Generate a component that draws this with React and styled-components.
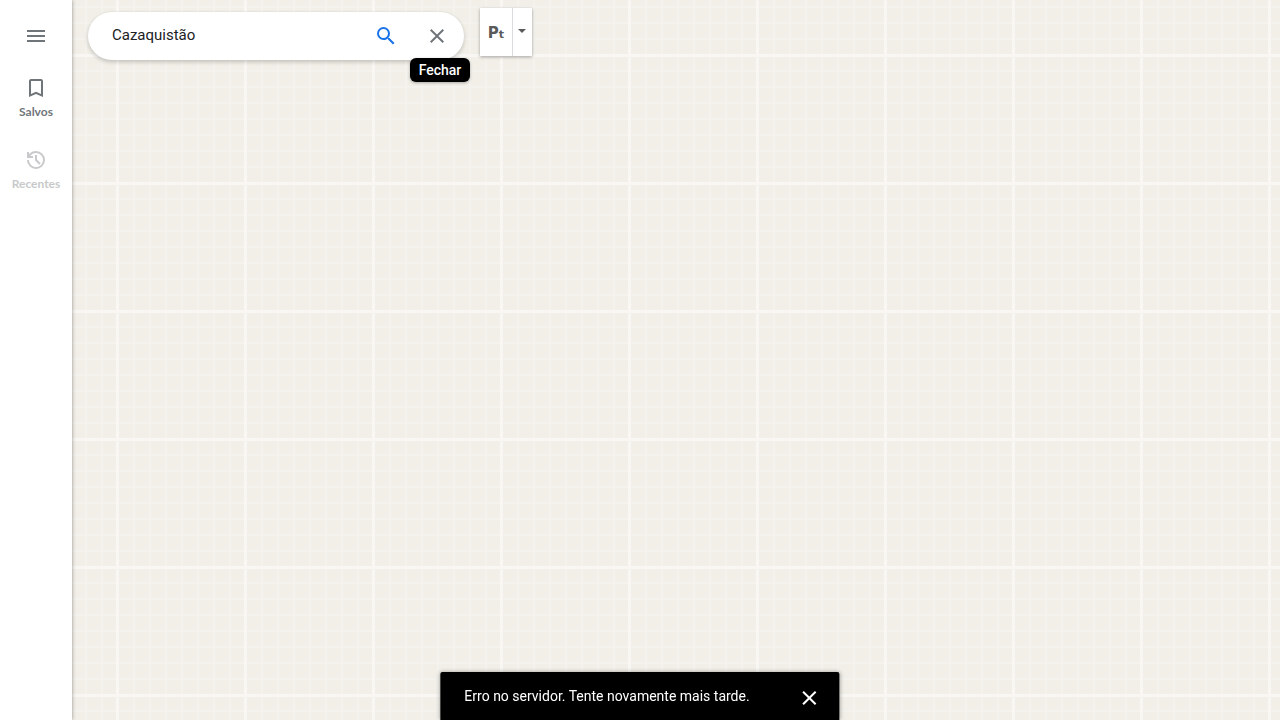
import React, { useState } from "react";
import styled, { createGlobalStyle } from "styled-components";

const GlobalStyle = createGlobalStyle`
  *, *::before, *::after { box-sizing: border-box; }
  html, body, #root { height: 100%; }
  body {
    margin: 0;
    overflow: hidden;
    font-family: Roboto, "Liberation Sans", sans-serif;
    color: #202124;
  }
  button, input { font: inherit; color: inherit; }
`;

const Page = styled.div`
  display: flex;
  min-height: 100%;
`;

const Rail = styled.nav`
  position: relative;
  z-index: 1;
  flex: none;
  width: 72px;
  display: flex;
  flex-direction: column;
  background: #fff;
  box-shadow: 0 0 4px rgba(0, 0, 0, 0.4);
`;

const MenuButton = styled.button`
  display: flex;
  justify-content: center;
  padding: 24px 0 16px;
  border: 0;
  background: none;
  color: #70757a;
  cursor: pointer;
`;

const RailButton = styled.button`
  display: flex;
  flex-direction: column;
  align-items: center;
  height: 72px;
  padding: 12px 0 0;
  border: 0;
  background: none;
  color: ${(p) => (p.disabled ? "#c8c9ca" : "#70757a")};
  cursor: ${(p) => (p.disabled ? "default" : "pointer")};
`;

const RailLabel = styled.span`
  font-family: Lato, Roboto, sans-serif;
  font-size: 12px;
  font-weight: 700;
  line-height: 24px;
`;

const MapArea = styled.main`
  position: relative;
  flex: 1;
  display: flex;
  align-items: flex-start;
  padding: 8px 16px;
  background-color: #f2efe8;
  background-image:
    linear-gradient(to right, #f8f7f4 3px, transparent 3px),
    linear-gradient(to bottom, #f8f7f4 3px, transparent 3px),
    linear-gradient(to right, #f4f2ed 2px, transparent 2px),
    linear-gradient(to bottom, #f4f2ed 2px, transparent 2px);
  background-size: 128px 128px, 128px 128px, 16px 16px, 16px 16px;
  background-position: 44px 54px, 44px 54px, 13px 6px, 13px 6px;
`;

const SearchBox = styled.form`
  position: relative;
  display: flex;
  align-items: center;
  width: 376px;
  height: 48px;
  margin: 4px 16px 0 0;
  padding: 0 3px 0 24px;
  border-radius: 24px;
  background: #fff;
  box-shadow: 0 2px 4px rgba(0, 0, 0, 0.2), 0 -1px 0 rgba(0, 0, 0, 0.02);
`;

const SearchInput = styled.input`
  flex: 1;
  min-width: 0;
  height: 20px;
  margin-bottom: 2px;
  padding: 0;
  border: 0;
  outline: 0;
  background: none;
  font-size: 15px;
  line-height: 20px;
`;

const IconButton = styled.button`
  flex: none;
  display: flex;
  align-items: center;
  justify-content: center;
  width: ${(p) => p.$width || 48}px;
  height: 48px;
  padding: 0;
  border: 0;
  background: none;
  color: ${(p) => p.$color};
  cursor: pointer;
`;

const Tooltip = styled.div`
  position: absolute;
  top: 46px;
  right: -6px;
  width: 60px;
  border-radius: 6px;
  background: #000;
  color: #fff;
  font-size: 14px;
  font-weight: 500;
  line-height: 24px;
  text-align: center;
  box-shadow: 0 1px 3px rgba(0, 0, 0, 0.3);
`;

const InputTools = styled.div`
  display: flex;
  height: 48px;
  background: #fff;
  box-shadow: 0 1px 3px rgba(0, 0, 0, 0.35);
`;

const LanguageButton = styled.button`
  width: 33px;
  padding: 2px 0 0;
  border: 0;
  border-right: 1px solid #dadce0;
  background: none;
  color: #5a5a5a;
  font-family: "DejaVu Sans", Roboto, sans-serif;
  font-size: 15px;
  font-weight: 700;
  cursor: pointer;
`;

const SmallLetter = styled.span`
  font-size: 11px;
`;

const LanguageMenuButton = styled.button`
  display: flex;
  justify-content: center;
  width: 19px;
  padding: 21px 2px 0 0;
  border: 0;
  background: none;
  color: #5a5a5a;
  cursor: pointer;
`;

const Snackbar = styled.div`
  position: fixed;
  z-index: 2;
  bottom: 0;
  left: 50%;
  transform: translateX(-50%);
  display: flex;
  align-items: flex-start;
  gap: 36px;
  height: 48px;
  padding: 2px 6px 0 24px;
  border-radius: 2px 2px 0 0;
  background: #000;
  color: #fff;
  box-shadow: 0 0 4px rgba(0, 0, 0, 0.35);
`;

const Message = styled.span`
  padding-top: 12px;
  font-size: 14px;
  line-height: 20px;
  white-space: nowrap;
`;

const Icon = ({ d, size = 24 }) => (
  <svg width={size} height={size} viewBox="0 0 24 24" fill="currentColor" aria-hidden="true">
    <path d={d} />
  </svg>
);

const icons = {
  menu: "M3 18h18v-2H3v2zm0-5h18v-2H3v2zm0-7v2h18V6H3z",
  bookmark: "M17 3H7c-1.1 0-2 .9-2 2v16l7-3 7 3V5c0-1.1-.9-2-2-2zm0 15l-5-2.18L7 18V5h10v13z",
  history:
    "M12 3a9 9 0 0 0-7 3.35V4H3v6h6V8H6.25A7 7 0 1 1 5 12H3a9 9 0 1 0 9-9zm-1 4v5.4l4.3 4.3 1.4-1.4-3.7-3.7V7h-2z",
  search:
    "M15.5 14h-.79l-.28-.27A6.47 6.47 0 0 0 16 9.5 6.5 6.5 0 1 0 9.5 16c1.61 0 3.09-.59 4.23-1.57l.27.28v.79l5 4.99L20.49 19l-4.99-5zm-6 0C7.01 14 5 11.99 5 9.5S7.01 5 9.5 5 14 7.01 14 9.5 11.99 14 9.5 14z",
  close:
    "M19 6.41L17.59 5 12 10.59 6.41 5 5 6.41 10.59 12 5 17.59 6.41 19 12 13.41 17.59 19 19 17.59 13.41 12z",
};

export default function App() {
  const [query, setQuery] = useState("Cazaquistão");

  return (
    <Page>
      <GlobalStyle />
      <Rail>
        <MenuButton type="button" aria-label="Menu">
          <Icon d={icons.menu} />
        </MenuButton>
        <RailButton type="button">
          <Icon d={icons.bookmark} />
          <RailLabel>Salvos</RailLabel>
        </RailButton>
        <RailButton type="button" disabled>
          <Icon d={icons.history} />
          <RailLabel>Recentes</RailLabel>
        </RailButton>
      </Rail>
      <MapArea>
        <SearchBox onSubmit={(e) => e.preventDefault()}>
          <SearchInput
            aria-label="Pesquisar"
            value={query}
            onChange={(e) => setQuery(e.target.value)}
          />
          <IconButton type="submit" aria-label="Pesquisar" $width={54} $color="#1a73e8">
            <Icon d={icons.search} />
          </IconButton>
          <IconButton
            type="button"
            aria-label="Fechar"
            $color="#70757a"
            onClick={() => setQuery("")}
          >
            <Icon d={icons.close} />
          </IconButton>
          <Tooltip role="tooltip">Fechar</Tooltip>
        </SearchBox>
        <InputTools>
          <LanguageButton type="button">
            P<SmallLetter>t</SmallLetter>
          </LanguageButton>
          <LanguageMenuButton type="button" aria-label="Idioma">
            <svg width="8" height="4" viewBox="0 0 8 4" fill="currentColor" aria-hidden="true">
              <path d="M0 0h8L4 4z" />
            </svg>
          </LanguageMenuButton>
        </InputTools>
      </MapArea>
      <Snackbar role="alert">
        <Message>Erro no servidor. Tente novamente mais tarde.</Message>
        <IconButton type="button" aria-label="Fechar aviso" $color="#fff">
          <Icon d={icons.close} />
        </IconButton>
      </Snackbar>
    </Page>
  );
}
